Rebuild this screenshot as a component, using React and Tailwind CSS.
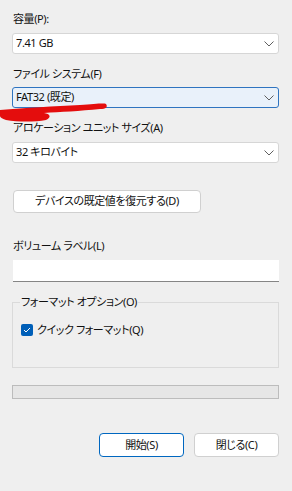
import React from "react";

const font = {
  fontFamily: '"Noto Sans", "Noto Sans CJK JP", sans-serif',
};

const txt = "text-[11px] tracking-[-0.4px] text-[#111111] [font-feature-settings:'palt']";
const labelCls = "h-4 leading-4 pl-px " + txt;

function Chevron() {
  return (
    <svg width="10" height="6" viewBox="0 0 10 6" className="shrink-0">
      <path d="M0.5 0.5 L5 5 L9.5 0.5" fill="none" stroke="#5f5f5f" strokeWidth="1" />
    </svg>
  );
}

function Combo({ value, focused }) {
  return (
    <div
      className={
        "flex h-[21px] w-[267px] items-center justify-between rounded-[3px] border pl-[3px] pr-[4px] " +
        txt +
        (focused ? " border-[#2f74c0] bg-[#e9f1fa]" : " border-[#d6d6d6] bg-white")
      }
    >
      <span>{value}</span>
      <Chevron />
    </div>
  );
}

function Scribble() {
  return (
    <svg width="110" height="22" viewBox="0 0 110 22" className="absolute left-0 top-[102px]">
      <path
        d="M0 8 C 25 6 55 4 80 3 C 95 2 104 1 106 2 C 108 5 106 7 100 7 C 80 9 60 10 44 11 C 50 12 52 15 46 18 C 35 20 18 20 6 18 C 2 17 0 15 0 14 Z"
        fill="#e40d0d"
      />
    </svg>
  );
}

function Btn({ children, primary, className = "" }) {
  return (
    <button
      className={
        "flex h-[24px] items-center justify-center rounded-[4px] border bg-white " +
        txt +
        (primary ? " border-[#0067c0] " : " border-[#d0d0d0] ") +
        className
      }
    >
      {children}
    </button>
  );
}

export default function App() {
  return (
    <div style={font} className="relative h-[491px] w-[292px] overflow-hidden bg-[#efefef]">
      <Scribble />
      <div className="flex flex-col pl-3 pt-[11px]">
        <div className={labelCls}>容量(P):</div>
        <div className="mt-[6px]">
          <Combo value="7.41 GB" />
        </div>

        <div className={labelCls + " mt-3"}>ファイル システム(F)</div>
        <div className="mt-[5px]">
          <Combo value="FAT32 (既定)" focused />
        </div>

        <div className={labelCls + " relative mt-3"}>アロケーション ユニット サイズ(A)</div>
        <div className="mt-[6px]">
          <Combo value="32 キロバイト" />
        </div>

        <Btn className="ml-px mt-[27px] !h-[23px] w-[188px]">デバイスの既定値を復元する(D)</Btn>

        <div className={labelCls + " mt-[25px]"}>ボリューム ラベル(L)</div>
        <div className="ml-px mt-[6px] h-[22px] w-[266px] border-b border-[#858585] bg-white" />

        <div className="relative mt-[20px] h-[66px] w-[267px] border border-[#dadada]">
          <div className={"absolute left-[7px] top-[-9px] bg-[#efefef] px-[1px] leading-4 " + txt}>
            フォーマット オプション(O)
          </div>
          <div className="ml-2 mt-[19px] flex items-center gap-[4px]">
            <span className="flex h-[12px] w-[12px] items-center justify-center rounded-[2px] bg-[#005fb8]">
              <svg width="8" height="6" viewBox="0 0 8 6">
                <path d="M1 3 L3 5 L7 1" fill="none" stroke="white" strokeWidth="1" />
              </svg>
            </span>
            <span className={"leading-4 " + txt}>クイック フォーマット(Q)</span>
          </div>
        </div>

        <div className="mt-[17px] h-[14px] w-[267px] border border-[#bcbcbc] bg-[#e6e6e6]" />

        <div className="mt-[34px] flex w-[267px] justify-end gap-[10px]">
          <Btn primary className="w-[85px]">開始(S)</Btn>
          <Btn className="w-[85px]">閉じる(C)</Btn>
        </div>
      </div>
    </div>
  );
}
